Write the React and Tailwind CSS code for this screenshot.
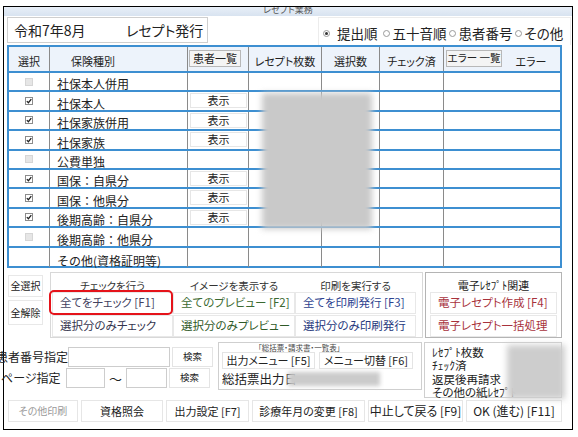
import React from 'react';

const rows = [
  { name: '社保本人併用', check: 'off' },
  { name: '社保本人', check: 'on', show: true },
  { name: '社保家族併用', check: 'on', show: true },
  { name: '社保家族', check: 'on', show: true },
  { name: '公費単独', check: 'off' },
  { name: '国保：自県分', check: 'on', show: true },
  { name: '国保：他県分', check: 'on', show: true },
  { name: '後期高齢：自県分', check: 'on', show: true },
  { name: '後期高齢：他県分', check: 'off' },
  { name: 'その他(資格証明等)', check: null },
];

const cols = 'grid grid-cols-[41px_138px_61px_73px_58px_64px_1fr]';
const vline = 'border-r border-[#8a8a8a]';

function Check({ state }) {
  if (!state) return null;
  if (state === 'off') return <span className="block w-[8px] h-[8px] bg-[#e6e6e6] border border-[#d6d6d6]" />;
  return (
    <span className="flex w-[8px] h-[8px] items-center justify-center bg-white border border-[#8c8c8c]">
      <svg width="6" height="6" viewBox="0 0 6 6">
        <path d="M0.8 3.1 L2.4 4.7 L5.3 1.1" fill="none" stroke="#222" strokeWidth="1.3" />
      </svg>
    </span>
  );
}

function Radio({ on, label, gap }) {
  return (
    <span className="flex items-center shrink-0 whitespace-nowrap">
      <span className="flex w-[7px] h-[7px] rounded-full border border-[#9a9a9a] bg-white items-center justify-center">
        {on && <span className="w-[3px] h-[3px] rounded-full bg-[#333]" />}
      </span>
      <span className={gap}>{label}</span>
    </span>
  );
}

function Btn({ children, className = '' }) {
  return (
    <div className={`flex items-center bg-white border border-[#dedede] leading-none whitespace-nowrap ${className}`}>
      {children}
    </div>
  );
}

export default function App() {
  return (
    <div className="w-[578px] h-[437px] bg-white overflow-hidden text-[#222] font-['Noto_Sans_CJK_JP',sans-serif] [font-feature-settings:'palt']">
      <div className="ml-[3px] mt-[6px] w-[570px] h-[424px] border border-black bg-white">
        {/* title bar */}
        <div className="h-[9px] bg-gradient-to-b from-[#e8eff8] to-[#d8e3f0] overflow-hidden flex justify-center">
          <span className="text-[9px] leading-none -mt-[2px] text-[#555]">レセプト業務</span>
        </div>

        {/* top row */}
        <div className="mt-[1px] h-[28px] flex">
          <div className="ml-[3px] w-[201px] h-[26px] border border-[#cfcfcf] bg-white flex items-center pl-[6px] text-[14px] leading-none">
            <span className="w-[112px]">令和7年8月</span>
            <span>レセプト発行</span>
          </div>
          <div className="ml-auto mr-[1px] w-[253px] h-[28px] border border-[#ececec] border-b-0 bg-white flex items-end pb-[5px] pl-[4px] text-[13.5px] leading-none overflow-hidden">
            <Radio on label="提出順" gap="ml-[7px] mr-[5px]" />
            <Radio label="五十音順" gap="ml-[3px] mr-[2px]" />
            <Radio label="患者番号" gap="ml-[3px] mr-[2px]" />
            <Radio label="その他" gap="ml-[3px]" />
          </div>
        </div>

        {/* table */}
        <div className="relative ml-[3px] w-[555px] h-[223px] border-2 border-[#3d8fd1]">
          <div className={`${cols} h-[26px] border-b-2 border-[#3d8fd1] bg-[#edf3fb] text-[11px] leading-none whitespace-nowrap`}>
            <div className={`${vline} flex items-end justify-center pb-[4px]`}>選択</div>
            <div className={`${vline} flex items-end pl-[21px] pb-[4px]`}>保険種別</div>
            <div className={`${vline} pt-[3px] pl-[1px]`}>
              <div className="w-[52px] h-[17px] flex items-center justify-center bg-[#f4f4f4] border border-[#b8b8b8]">患者一覧</div>
            </div>
            <div className={`${vline} flex items-end justify-center pb-[4px]`}>レセプト枚数</div>
            <div className={`${vline} flex items-end justify-center pb-[4px]`}>選択数</div>
            <div className={`${vline} flex items-end justify-center pb-[4px]`}>チェック済</div>
            <div className="flex">
              <div className="ml-[2px] mt-[3px] w-[56px] h-[17px] flex items-center justify-center bg-[#f4f4f4] border border-[#b8b8b8] text-[10.5px]">エラー 一覧</div>
              <div className="flex-1 flex items-end justify-center pb-[4px]">エラー</div>
            </div>
          </div>
          {rows.map((r, i) => (
            <div
              key={r.name}
              className={`${cols} h-[19.4px] ${i < rows.length - 1 ? 'border-b-2 border-[#3d8fd1]' : ''}`}
            >
              <div className={`${vline} flex items-center justify-center`}>
                <Check state={r.check} />
              </div>
              <div className={`${vline} flex items-end pl-[7px] text-[12px] leading-none whitespace-nowrap [font-feature-settings:normal]`}>{r.name}</div>
              <div className={`${vline} pt-[1px] pl-[2px]`}>
                {r.show && (
                  <Btn className="justify-center w-[57px] h-[15px] text-[11px] border-[#e6e6e6]">表示</Btn>
                )}
              </div>
              <div className={vline} />
              <div className={vline} />
              <div className={vline} />
              <div />
            </div>
          ))}
          <div className="absolute left-[253px] top-[46px] w-[110px] h-[136px] bg-[#c9c9c9] blur-[3px]" />
        </div>

        {/* action section */}
        <div className="mt-[2px] h-[68px] flex">
          <div className="ml-[4px] w-[35px] text-[10px]">
            <Btn className="justify-center mt-[5px] h-[22px] border-[#e8e8e8]">全選択</Btn>
            <Btn className="justify-center mt-[3px] h-[25px] border-[#e8e8e8]">全解除</Btn>
          </div>
          <div className="relative ml-[7px] mt-[2px] w-[373px] h-[66px] border border-[#d8d8d8] px-[1px]">
            <div className="grid grid-cols-[121px_122px_121px] h-[18px] text-[10.5px] leading-none text-[#333]">
              <div className="flex items-end justify-center">チェックを行う</div>
              <div className="flex items-end justify-center">イメージを表示する</div>
              <div className="flex items-end justify-center">印刷を実行する</div>
            </div>
            <div className="grid grid-cols-[121px_122px_121px] mt-[1px] text-[11.5px]">
              <Btn className="pl-[7px] h-[22px] border-[#e8e8e8] text-[#43435f]">全てをチェック [F1]</Btn>
              <Btn className="pl-[7px] h-[22px] border-[#e8e8e8] text-[#3b6a31]">全てのプレビュー [F2]</Btn>
              <Btn className="pl-[7px] h-[22px] border-[#e8e8e8] text-[#2d438f]">全てを印刷発行 [F3]</Btn>
              <Btn className="pl-[7px] h-[22px] border-[#e8e8e8] text-[#35354f] mt-[1px]">選択分のみチェック</Btn>
              <Btn className="pl-[7px] h-[22px] border-[#e8e8e8] text-[#2f5a27] mt-[1px]">選択分のみプレビュー</Btn>
              <Btn className="pl-[7px] h-[22px] border-[#e8e8e8] text-[#26387d] mt-[1px]">選択分のみ印刷発行</Btn>
            </div>
            <div className="absolute left-[-2px] top-[17px] w-[124px] h-[25px] border-2 border-[#e5131a] rounded-[5px]" />
          </div>
          <div className="ml-[2px] mt-[2px] w-[137px] h-[66px] border border-[#b4b4b4] px-[4px]">
            <div className="h-[18px] flex items-end justify-center text-[11px] leading-none">電子ﾚｾﾌﾟﾄ関連</div>
            <Btn className="pl-[7px] mt-[1px] h-[22px] border-[#e8e8e8] text-[11.5px] text-[#a8323c]">電子レセプト作成 [F4]</Btn>
            <Btn className="pl-[7px] mt-[1px] h-[22px] border-[#e8e8e8] text-[11.5px] text-[#a8323c]">電子レセプト一括処理</Btn>
          </div>
        </div>

        {/* search / summary section */}
        <div className="h-[60px] flex items-start">
          <div className="w-[214px] pt-[9px] text-[12px] leading-none">
            <div className="flex h-[20px]">
              <div className="w-[64px] flex items-center justify-end whitespace-nowrap">患者番号指定</div>
              <div className="w-[102px] h-[20px] bg-white border border-[#cdcdcd]" />
              <Btn className="justify-center ml-[2px] w-[41px] h-[20px] text-[9.5px] border-[#e4e4e4]">検索</Btn>
            </div>
            <div className="flex h-[20px] mt-[1px]">
              <div className="w-[65px] flex items-center whitespace-nowrap -ml-[3px] pr-[3px]">ページ指定</div>
              <div className="w-[39px] h-[20px] bg-white border border-[#cdcdcd]" />
              <div className="w-[21px] flex items-center justify-center text-[13px]">～</div>
              <div className="w-[41px] h-[20px] bg-white border border-[#cdcdcd]" />
              <Btn className="justify-center ml-[2px] w-[41px] h-[20px] text-[9.5px] border-[#e4e4e4]">検索</Btn>
            </div>
          </div>
          <div className="mt-[4px] w-[204px] h-[48px] border border-[#cfcfcf] px-[3px]">
            <div className="h-[9px] pl-[36px] text-[7.5px] leading-none text-[#444] pt-[1px]">「総括票・請求書・一覧表」</div>
            <div className="flex gap-[4px] h-[17px] text-[11px]">
              <Btn className="justify-center w-[93px] h-[17px] border-[#e4e4e4]">出力メニュー [F5]</Btn>
              <Btn className="justify-center w-[94px] h-[17px] border-[#e4e4e4]">メニュー切替 [F6]</Btn>
            </div>
            <div className="flex items-center h-[18px] mt-[1px]">
              <span className="w-[66px] text-[12.5px] leading-none whitespace-nowrap">総括票出力日</span>
              <div className="w-[92px] h-[14px] bg-[#cbcbcb] blur-[2px]" />
            </div>
          </div>
          <div className="relative mt-[4px] ml-[2px] w-[138px] h-[56px] border border-[#cfcfcf] pl-[7px] pt-[3px] text-[11.5px] leading-[13.3px] whitespace-nowrap">
            <div>ﾚｾﾌﾟﾄ枚数</div>
            <div>ﾁｪｯｸ済</div>
            <div>返戻後再請求</div>
            <div>その他の紙ﾚｾﾌﾟﾄ</div>
            <div className="absolute left-[82px] top-[2px] w-[58px] h-[54px] bg-[#cdcdcd] blur-[3px]" />
          </div>
        </div>

        {/* footer buttons */}
        <div className="mt-[2px] ml-[4px] flex gap-[3px] text-[12px]">
          <Btn className="justify-center w-[70px] h-[22px] text-[10px] text-[#9a9a9a] bg-[#fbfbfb] border-[#e6e6e6]">その他印刷</Btn>
          <Btn className="justify-center w-[82px] h-[22px] text-[11px] bg-[#fbfbfb] border-[#e6e6e6]">資格照会</Btn>
          <Btn className="justify-center w-[83px] h-[22px] text-[11px] bg-[#fbfbfb] border-[#e6e6e6]">出力設定 [F7]</Btn>
          <Btn className="justify-center w-[113px] h-[22px] text-[11px] bg-[#fbfbfb] border-[#e6e6e6]">診療年月の変更 [F8]</Btn>
          <Btn className="justify-center w-[95px] h-[22px] bg-[#fbfbfb] border-[#e6e6e6]">中止して戻る [F9]</Btn>
          <Btn className="justify-center w-[96px] h-[22px] bg-[#fbfbfb] border-[#e6e6e6]">OK (進む) [F11]</Btn>
        </div>
      </div>
    </div>
  );
}
